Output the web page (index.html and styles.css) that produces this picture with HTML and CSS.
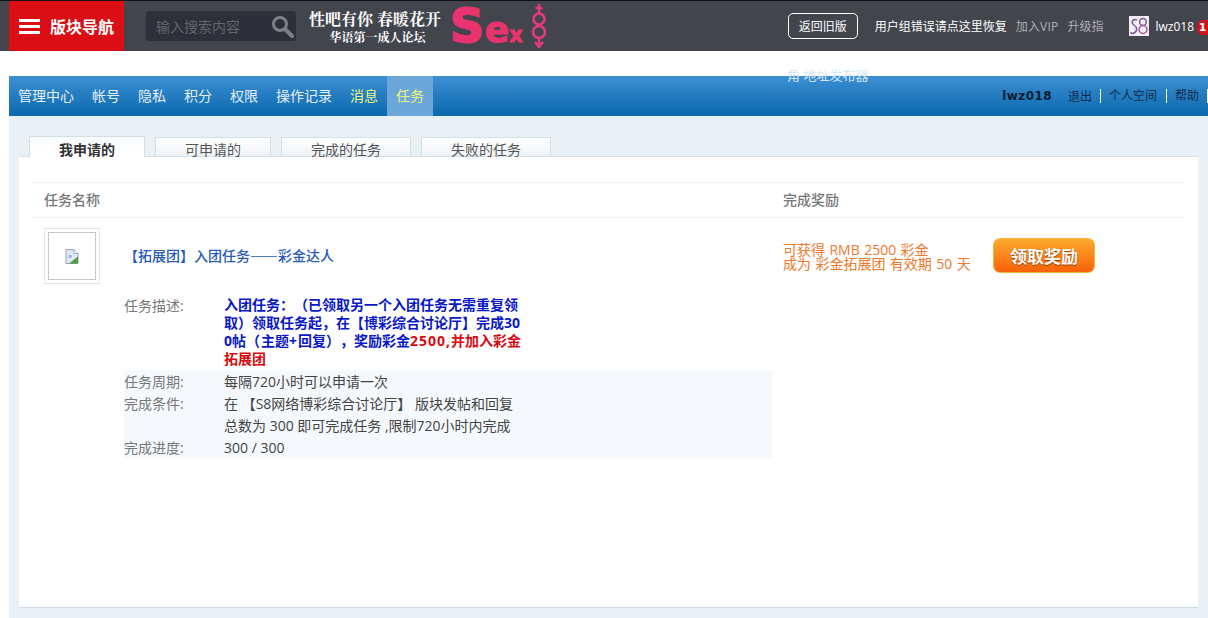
FILE: index.html
```html
<!DOCTYPE html>
<html lang="zh">
<head>
<meta charset="utf-8">
<title>任务</title>
<link rel="stylesheet" href="styles.css">
</head>
<body>
<header class="topbar">
  <a class="forum-nav">
    <span class="burger"><i></i><i></i><i></i></span>
    <span class="forum-nav-text">版块导航</span>
  </a>
  <div class="search">
    <span class="search-text">输入搜索内容</span>
    <svg class="search-icon" width="24" height="24" viewBox="0 0 24 24"><circle cx="10" cy="10" r="6.5" fill="none" stroke="#7d8087" stroke-width="3"/><path d="M15 15l7 7" stroke="#7d8087" stroke-width="4" stroke-linecap="round"/></svg>
  </div>
  <div class="slogan">
    <div class="slogan-a">性吧有你 春暖花开</div>
    <div class="slogan-b">华语第一成人论坛</div>
  </div>
  <div class="sex-logo">
    <span class="sex-s">S</span><span class="sex-e">e</span><span class="sex-x">x</span>
    <svg class="sex-mark" width="16" height="44" viewBox="0 0 16 44"><path d="M8 0v9M4.5 4h7" stroke="#e83a78" stroke-width="2.4" fill="none"/><circle cx="8" cy="15" r="5.5" fill="none" stroke="#e83a78" stroke-width="2.6"/><circle cx="8" cy="28" r="6" fill="none" stroke="#e83a78" stroke-width="2.6"/><path d="M8 34v6M4 38l4 5 4-5" stroke="#e83a78" stroke-width="2.4" fill="none"/></svg>
  </div>
  <div class="top-right">
    <a class="old-btn">返回旧版</a>
    <a class="top-link-w">用户组错误请点这里恢复</a>
    <a class="top-link vip">加入VIP</a>
    <a class="top-link">升级指</a>
    <svg class="avatar" width="20" height="20" viewBox="0 0 20 20"><rect width="20" height="20" fill="#f2edf4"/><path d="M8 4C3 2 2 7 5 9s4 6 0 8c-2 1-3 0-3-1" fill="none" stroke="#7a5c92" stroke-width="1.5"/><circle cx="14" cy="6" r="3.4" fill="none" stroke="#7a5c92" stroke-width="1.5"/><circle cx="14" cy="13.500" r="3.900" fill="none" stroke="#a05f95" stroke-width="1.5"/></svg>
    <span class="top-user">lwz018</span>
    <span class="badge">1</span>
  </div>
</header>

<main class="wrap">
  <nav class="bluebar">
    <span class="stray">角 地址发布器</span>
    <ul class="menu">
      <li>管理中心</li><li>帐号</li><li>隐私</li><li>积分</li><li>权限</li><li>操作记录</li>
      <li class="hl">消息</li><li class="hl on">任务</li>
    </ul>
    <div class="user-links">
      <b class="uname">lwz018</b>
      <a class="ul-first">退出</a>
      <a class="ul-sep">个人空间</a>
      <a class="ul-sep">帮助</a>
      <i class="ul-end"></i>
    </div>
  </nav>

  <section class="body">
    <div class="tabs">
      <a class="tab tab-a current">我申请的</a>
      <a class="tab tab-a">可申请的</a>
      <a class="tab tab-b">完成的任务</a>
      <a class="tab tab-b">失败的任务</a>
    </div>
    <div class="panel">
      <div class="thead">
        <span class="col-name">任务名称</span>
        <span class="col-reward">完成奖励</span>
      </div>
      <div class="task">
        <div class="task-left">
          <div class="task-head">
            <div class="thumb"><div class="thumb-in">
              <svg width="14" height="15" viewBox="0 0 14 15"><path d="M1 .5h8l4 4v10H1z" fill="#dfe8f5" stroke="#9aa5b5"/><path d="M9 .5v4h4" fill="#fff" stroke="#9aa5b5"/><path d="M4 14.500l9-7v7z" fill="#4f9a3c"/><path d="M3 6h4v3H3z" fill="#a9c4ea"/></svg>
            </div></div>
            <a class="task-title">【拓展团】入团任务——彩金达人</a>
          </div>
          <div class="details">
            <div class="row row-desc">
              <span class="lbl">任务描述:</span>
              <div class="desc"><span class="blue">入团任务：（已领取另一个入团任务无需重复领取）领取任务起，在【博彩综合讨论厅】完成300帖<span class="wide">（</span>主题<span class="wide">+</span>回复），奖励彩金</span><span class="red"><span class="wide">2500,</span>并加入彩金拓展团</span></div>
            </div>
            <div class="tint">
              <div class="row"><span class="lbl">任务周期:</span><span class="val">每隔720小时可以申请一次</span></div>
              <div class="row"><span class="lbl">完成条件:</span><span class="val">在 【S8网络博彩综合讨论厅】 版块发帖和回复</span></div>
              <div class="row"><span class="lbl"></span><span class="val">总数为 300 即可完成任务 ,限制720小时内完成</span></div>
              <div class="row"><span class="lbl">完成进度:</span><span class="val">300 / 300</span></div>
            </div>
          </div>
        </div>
        <div class="task-right">
          <div class="reward">可获得 RMB 2500 彩金<br>成为 彩金拓展团 有效期 50 天</div>
          <a class="claim">领取奖励</a>
        </div>
      </div>
    </div>
  </section>
</main>
</body>
</html>
```
FILE: styles.css
```css
* { box-sizing: border-box; }
html, body { margin: 0; padding: 0; height: 618px; overflow: hidden; background: #fff; }
body { font-family: "Open Sans", "Noto Sans CJK SC", sans-serif; font-size: 14px; color: #444; text-spacing-trim: space-all; }
ul { list-style: none; margin: 0; padding: 0; }

.topbar { display: flex; align-items: center; height: 51px; padding-left: 9px; background: #43454d; border-top: 1px solid #111; white-space: nowrap; }
.forum-nav { display: flex; align-items: center; width: 115px; height: 50px; padding-left: 10px; background: #db0d15; flex: none; }
.burger { display: flex; flex-direction: column; gap: 3px; width: 21px; margin-right: 10px; }
.burger i { display: block; height: 3px; background: #fff; }
.forum-nav-text { font-size: 16px; font-weight: 700; color: #fff; }
.search { display: flex; align-items: center; justify-content: space-between; width: 150px; height: 30px; margin-left: 22px; padding: 0 2px 0 10px; background: #2d3038; border-radius: 3px; flex: none; }
.search-text { font-size: 14px; color: #62656c; }
.slogan { width: 134px; margin-left: 12px; text-align: center; color: #fff; font-family: "Noto Serif CJK SC", "Noto Sans CJK SC", serif; font-weight: 700; flex: none; }
.slogan-a { font-size: 16px; line-height: 21px; white-space: nowrap; }
.slogan-b { font-size: 12px; line-height: 16px; padding-left: 5px; }
.sex-logo { display: flex; align-items: baseline; margin-left: 8px; padding-top: 9px; font-family: "DejaVu Sans", sans-serif; font-weight: 700; color: #e8336f; flex: none; }
.sex-s { font-size: 47px; line-height: 40px; -webkit-text-stroke: 2px #e8336f; }
.sex-e { font-size: 36px; line-height: 40px; -webkit-text-stroke: 1px #e8336f; margin-left: 1px; }
.sex-x { font-size: 21px; line-height: 40px; -webkit-text-stroke: 1px #e8336f; }
.sex-mark { margin-left: 8px; align-self: flex-start; margin-top: -2px; height: 44px; }

.top-right { display: flex; align-items: center; margin-left: auto; font-size: 12px; position: relative; padding-right: 14px; }
.old-btn { display: flex; align-items: center; justify-content: center; width: 70px; height: 26px; border: 1px solid #fff; border-radius: 5px; color: #fff; margin-right: 17px; }
.top-link-w { color: #fff; margin-right: 9px; }
.top-link { color: #aeb0b5; margin-right: 8px; }
.vip { margin-right: 9px; letter-spacing: .2px; }
.avatar { margin-left: 18px; margin-right: 6px; }
.top-user { color: #fff; font-size: 12px; }
.badge { position: absolute; right: 0; top: 7px; width: 11px; height: 15px; background: #d5101c; border-radius: 6px 0 0 6px; color: #fff; font: 700 11px/15px "DejaVu Sans", sans-serif; text-align: center; }

.wrap { margin: 25px 0 0 9px; }
.bluebar { position: relative; display: flex; align-items: stretch; justify-content: space-between; height: 40px; background: linear-gradient(#3d8fd2, #0a68ad); }
.stray { position: absolute; left: 778px; top: -8px; font-size: 13px; line-height: 14px; color: #d6e8f6; }
.menu { display: flex; align-items: center; }
.menu li { display: flex; align-items: center; height: 40px; padding: 0 9px 2px; font-size: 14px; color: #e6f0f8; }
.menu .hl { color: #e9f77f; }
.menu .on { background: #6ba7d8; }
.user-links { display: flex; align-items: center; padding-bottom: 1px; font-size: 12px; color: #0c2c4c; }
.uname { font: 700 12px "DejaVu Sans", sans-serif; letter-spacing: .4px; color: #0a1c34; margin-right: 16px; }
.ul-first { padding-right: 8px; }
.ul-sep { padding: 0 9px 0 8px; border-left: 1px solid #fff; line-height: 14px; }
.ul-sep:last-of-type { padding-right: 8px; }
.ul-end { width: 1px; height: 14px; background: #fff; }

.body { height: 502px; padding: 20px 10px 11px; background: #e9f0f6; }
.tabs { display: flex; gap: 10px; align-items: flex-start; height: 21px; padding-left: 10px; background: linear-gradient(#d5dfe8, #d5dfe8) bottom / 100% 1px no-repeat; }
.tab { display: block; height: 20px; margin-top: 1px; padding-top: 5px; text-align: center; font-size: 14px; line-height: 14px; color: #555; background: linear-gradient(#fff, #eef3f8); border: 1px solid #d5dfe8; }
.tab-a { width: 116px; }
.tab-b { width: 130px; }
.tab.current { height: 21px; margin-top: 0; padding-top: 6px; border-bottom: 0; font-weight: 700; color: #333; background: linear-gradient(#f9fbfd, #fff); }

.panel { height: 451px; padding: 25px 14px 0 13px; background: #fff; border-bottom: 1px solid #cfdbe6; }
.thead { display: flex; height: 36px; align-items: center; padding-bottom: 2px; border-top: 1px solid #eee; border-bottom: 1px solid #eee; font-weight: 500; color: #777; font-size: 14px; }
.col-name { width: 751px; padding-left: 12px; }
.task { display: flex; padding-top: 10px; }
.task-left { width: 740px; padding-left: 12px; flex: none; }
.task-head { display: flex; align-items: center; height: 56px; }
.thumb { width: 56px; height: 56px; padding: 3px; border: 1px solid #e6e6e6; flex: none; }
.thumb-in { display: flex; align-items: center; justify-content: center; width: 48px; height: 48px; border: 1px solid #c9c9c9; }
.task-title { margin: 0 0 2px 24px; font-family: "Noto Sans CJK SC", sans-serif; color: #2a5bb5; font-size: 14px; font-weight: 500; }
.details { margin-left: 80px; margin-top: 11px; width: 648px; }
.row { display: flex; font-size: 14px; line-height: 24px; height: 22px; color: #555; }
.lbl { width: 100px; color: #777; flex: none; }
.val { color: #444; white-space: nowrap; }
.row-desc { height: 75px; line-height: 22px; }
.desc { width: 298px; padding-top: 1px; font-size: 14px; font-weight: 700; line-height: 18px; word-break: break-all; }
.wide { letter-spacing: 1px; }
.blue { color: #0a18c8; }
.red { color: #d80b12; }
.tint { background: #f5f9fd; }
.task-right { display: flex; align-items: flex-start; padding-top: 10px; margin-left: 11px; }
.reward { width: 210px; padding-top: 5px; color: #f0782a; font-size: 14px; line-height: 14px; word-spacing: .8px; white-space: nowrap; }
.claim { display: flex; align-items: center; justify-content: center; width: 102px; height: 35px; border: 1px solid #f5b541; border-radius: 7px; background: linear-gradient(#fdab2d, #f9610a); color: #fff; font-size: 17px; font-weight: 700; text-shadow: 0 1px 1px #8a3a00; }
```
